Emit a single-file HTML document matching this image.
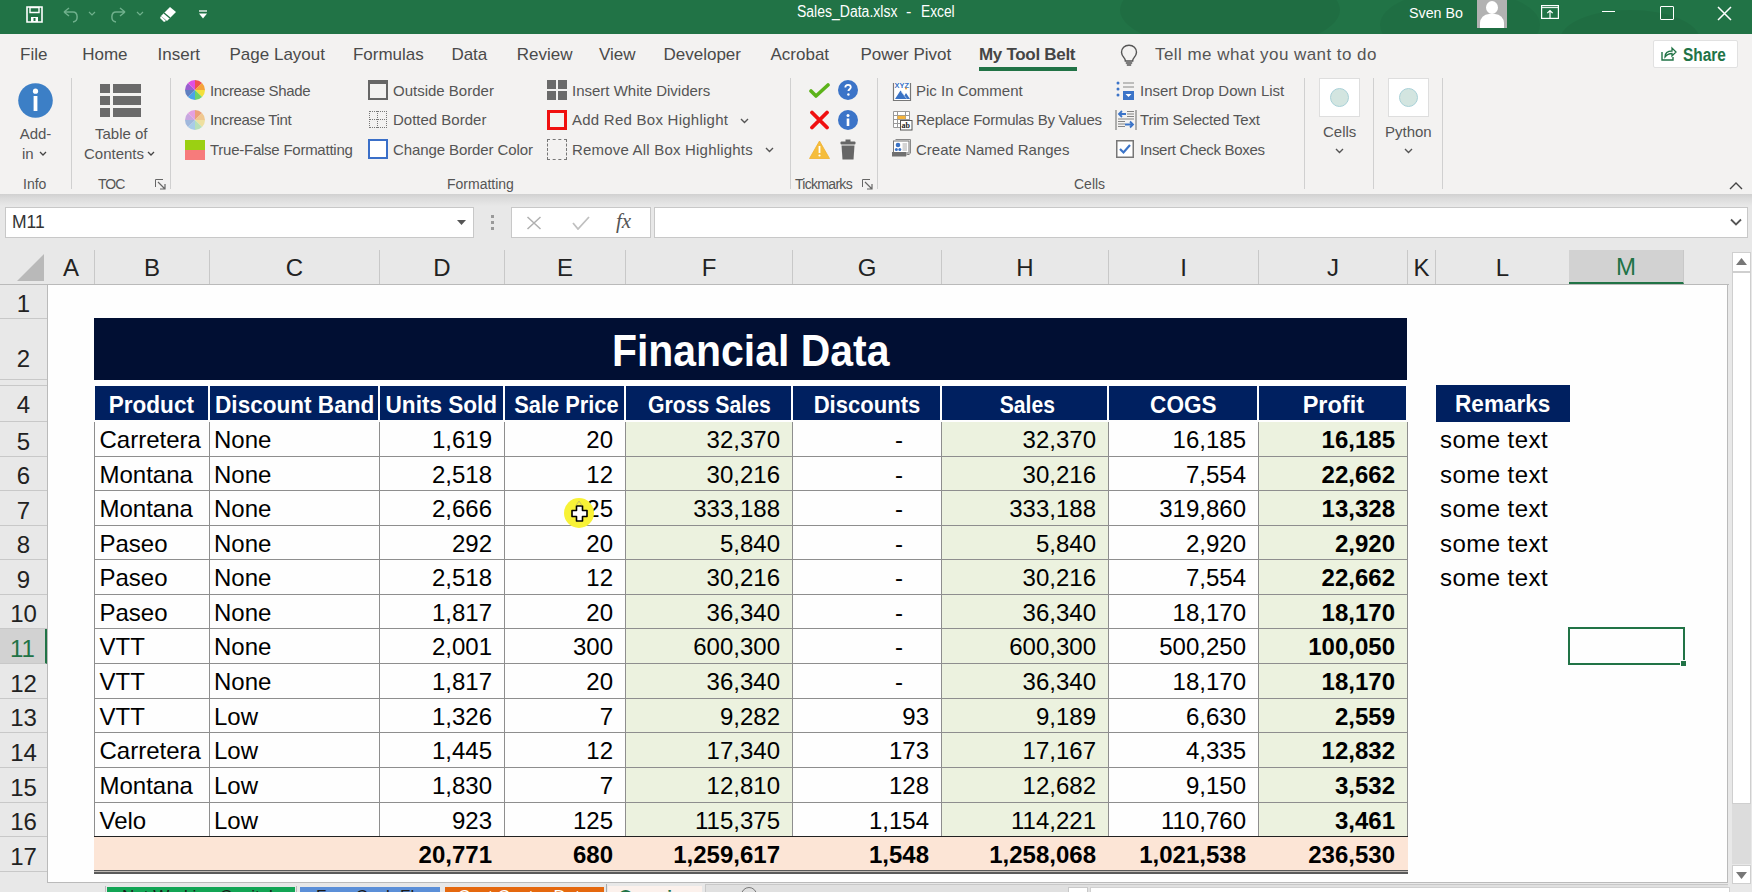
<!DOCTYPE html><html><head><meta charset="utf-8"><style>
*{margin:0;padding:0;box-sizing:border-box}
html,body{width:1752px;height:892px;overflow:hidden;background:#fff;font-family:"Liberation Sans", sans-serif}
.a{position:absolute}
.t{position:absolute;white-space:pre;line-height:1}
.tab{position:absolute;top:45px;font-size:17px;color:#4a4a4a;white-space:pre;line-height:20px}
.rl{position:absolute;font-size:15px;color:#555;white-space:pre;line-height:18px}
.gl{position:absolute;top:176px;font-size:14px;color:#555;white-space:pre;line-height:16px}
.sep{position:absolute;top:78px;width:1px;height:111px;background:#d0d0d0}
.ch{position:absolute;top:250px;height:34px;font-size:24px;line-height:36px;text-align:center;color:#222;border-right:1px solid #c8c8c8}
.rh{position:absolute;left:0;width:47px;font-size:24px;padding-top:2px;text-align:center;color:#222;border-bottom:1px solid #c8c8c8}
.c{position:absolute;font-size:24px;white-space:pre;color:#000;line-height:1}
.hd{position:absolute;background:#002060;color:#fff;font-weight:bold;font-size:24px;text-align:center;line-height:37px;white-space:pre} .hd span{display:inline-block;transform:scaleX(0.94)}
</style></head><body><div class="a" style="left:0;top:0;width:1752px;height:34px;background:#217346"></div><div class="a" style="left:1000px;top:0;width:752px;height:34px;overflow:hidden"><div class="a" style="left:120px;top:-30px;width:220px;height:80px;border-radius:50%;background:rgba(0,0,0,0.05)"></div><div class="a" style="left:380px;top:-10px;width:160px;height:70px;border-radius:50%;background:rgba(0,0,0,0.04)"></div><div class="a" style="left:560px;top:10px;width:140px;height:60px;border-radius:50%;background:rgba(0,0,0,0.05)"></div></div><svg class="a" style="left:26px;top:6px" width="17" height="17" viewBox="0 0 17 17"><path d="M1 1h15v15H1z" fill="none" stroke="#fff" stroke-width="1.6"/><path d="M4 1.5h9v5H4z" fill="none" stroke="#fff" stroke-width="1.4"/><rect x="5" y="11" width="7" height="5" fill="#fff"/><rect x="7.5" y="12" width="2" height="3" fill="#217346"/></svg><svg class="a" style="left:61px;top:7px" width="36" height="16" viewBox="0 0 36 16"><path d="M3 5 L8 1 M3 5 L8 9 M3 5 H12 C17 5 18 14 12 15" fill="none" stroke="#6fb08c" stroke-width="1.5"/><path d="M28 5 L31 8 L34 5" fill="none" stroke="#6fb08c" stroke-width="1.2"/></svg><svg class="a" style="left:110px;top:7px" width="36" height="16" viewBox="0 0 36 16"><path d="M15 5 L10 1 M15 5 L10 9 M15 5 H6 C1 5 0 14 6 15" fill="none" stroke="#6fb08c" stroke-width="1.5"/><path d="M27 5 L30 8 L33 5" fill="none" stroke="#6fb08c" stroke-width="1.2"/></svg><svg class="a" style="left:159px;top:6px" width="18" height="17" viewBox="0 0 18 17"><path d="M11 1 L17 6 L8 15 L2 10 Z" fill="#fff"/><path d="M5 7 L11 12" stroke="#217346" stroke-width="1.3"/><path d="M2 10 L1 12 L5 16 L7 15" fill="#fff"/></svg><svg class="a" style="left:199px;top:10px" width="8" height="9" viewBox="0 0 8 9"><path d="M0 1h8" stroke="#fff" stroke-width="1.3"/><path d="M0 3.5h8l-4 5z" fill="#fff"/></svg><div class="t" style="left:797px;top:4px;font-size:16px;color:#fff;transform:scaleX(0.875);transform-origin:0 0">Sales_Data.xlsx</div><div class="t" style="left:906px;top:4px;font-size:16px;color:#fff">-</div><div class="t" style="left:921px;top:4px;font-size:16px;color:#fff;transform:scaleX(0.86);transform-origin:0 0">Excel</div><div class="t" style="left:1409px;top:5px;font-size:15.5px;color:#fff;transform:scaleX(0.92);transform-origin:0 0">Sven Bo</div><div class="a" style="left:1477px;top:0;width:30px;height:28px;background:#b2b2b2;overflow:hidden"><div class="a" style="left:9px;top:1px;width:12px;height:13px;border-radius:50%;background:#fff"></div><div class="a" style="left:3px;top:14px;width:24px;height:22px;border-radius:9px 9px 0 0;background:#fff"></div></div><svg class="a" style="left:1541px;top:5px" width="18" height="14" viewBox="0 0 18 14"><rect x="0.6" y="0.6" width="16.8" height="12.8" fill="none" stroke="#fff" stroke-width="1.2"/><path d="M1 2.6h16" stroke="#fff" stroke-width="1"/><path d="M9 13V5.5M6.3 8.2L9 5.5l2.7 2.7" fill="none" stroke="#fff" stroke-width="1.2"/></svg><div class="a" style="left:1602px;top:11px;width:13px;height:1px;background:#fff"></div><div class="a" style="left:1660px;top:6px;width:14px;height:14px;border:1.5px solid #fff;border-radius:1px"></div><svg class="a" style="left:1717px;top:6px" width="15" height="15" viewBox="0 0 15 15"><path d="M1 1L14 14M14 1L1 14" stroke="#fff" stroke-width="1.5"/></svg><div class="a" style="left:0;top:34px;width:1752px;height:160px;background:#f3f2f1"></div><div class="tab" style="left:20.0px">File</div><div class="tab" style="left:82.2px">Home</div><div class="tab" style="left:157.5px">Insert</div><div class="tab" style="left:229.5px">Page Layout</div><div class="tab" style="left:352.9px">Formulas</div><div class="tab" style="left:451.4px">Data</div><div class="tab" style="left:516.7px">Review</div><div class="tab" style="left:598.9px">View</div><div class="tab" style="left:663.5px">Developer</div><div class="tab" style="left:770.5px">Acrobat</div><div class="tab" style="left:860.5px">Power Pivot</div><div class="tab" style="left:979px;font-weight:bold;color:#454545;letter-spacing:-0.3px">My Tool Belt</div><div class="a" style="left:979px;top:67px;width:98px;height:4px;background:#217346"></div><svg class="a" style="left:1120px;top:44px" width="18" height="22" viewBox="0 0 18 22"><path d="M9 1.2C4.6 1.2 1.5 4.3 1.5 8.3c0 2.6 1.5 4.3 2.6 5.6.8.9 1.2 1.8 1.2 2.8V17h7.4v-.3c0-1 .4-1.9 1.2-2.8 1.1-1.3 2.6-3 2.6-5.6 0-4-3.1-7.1-7.5-7.1z" fill="none" stroke="#555" stroke-width="1.4"/><path d="M5.8 19h6.4M6.8 21h4.4" stroke="#555" stroke-width="1.4"/></svg><div class="tab" style="left:1155px;color:#555;letter-spacing:0.45px">Tell me what you want to do</div><div class="a" style="left:1653px;top:40px;width:85px;height:28px;background:#fff;border:1px solid #e1e1e1;border-radius:2px"></div><svg class="a" style="left:1661px;top:46px" width="16" height="15" viewBox="0 0 16 15"><path d="M1 6v8h11v-3" fill="none" stroke="#217346" stroke-width="1.4"/><path d="M4 11c0-4 3-6 7-6V2l4 4-4 4V7.5c-3 0-5 1-7 3.5z" fill="none" stroke="#217346" stroke-width="1.3"/></svg><div class="tab" style="left:1683px;top:45px;font-weight:bold;color:#217346;font-size:17.5px;transform:scaleX(0.88);transform-origin:0 0">Share</div><div class="a" style="left:0;top:194px;width:1752px;height:56px;background:#e8e8e8"></div><div class="a" style="left:0;top:194px;width:1752px;height:12px;background:linear-gradient(#d0d0d0,#dcdcdc 40%,#e8e8e8)"></div><div class="sep" style="left:71px"></div><div class="sep" style="left:170px"></div><div class="sep" style="left:790px"></div><div class="sep" style="left:877px"></div><div class="sep" style="left:1304px"></div><div class="sep" style="left:1373px"></div><div class="sep" style="left:1442px"></div><svg class="a" style="left:18px;top:83px" width="35" height="35" viewBox="0 0 35 35"><circle cx="17.5" cy="17.5" r="17.3" fill="#3c7fc6"/><circle cx="17.5" cy="8.2" r="2.6" fill="#fff"/><rect x="15.6" y="13" width="3.8" height="15" fill="#fff"/></svg><div class="rl" style="left:18px;top:125px;width:35px;text-align:center">Add-</div><div class="rl" style="left:22px;top:145px">in</div><svg class="a" style="left:39px;top:151px" width="8" height="5" viewBox="0 0 8 5"><path d="M1 1l3 3 3-3" fill="none" stroke="#444" stroke-width="1.3"/></svg><div class="gl" style="left:23px">Info</div><div class="a" style="left:100px;top:84px;width:10px;height:9px;background:#6a6a6a"></div><div class="a" style="left:113px;top:84px;width:28px;height:9px;background:#6a6a6a"></div><div class="a" style="left:100px;top:96px;width:10px;height:9px;background:#6a6a6a"></div><div class="a" style="left:113px;top:96px;width:28px;height:9px;background:#6a6a6a"></div><div class="a" style="left:100px;top:108px;width:10px;height:9px;background:#6a6a6a"></div><div class="a" style="left:113px;top:108px;width:28px;height:9px;background:#6a6a6a"></div><div class="rl" style="left:95px;top:125px">Table of</div><div class="rl" style="left:84px;top:145px">Contents</div><svg class="a" style="left:147px;top:151px" width="8" height="5" viewBox="0 0 8 5"><path d="M1 1l3 3 3-3" fill="none" stroke="#444" stroke-width="1.3"/></svg><div class="gl" style="left:98px;letter-spacing:-1px">TOC</div><svg class="a" style="left:155px;top:179px" width="11" height="11" viewBox="0 0 11 11"><path d="M0.5 8V0.5H8" fill="none" stroke="#666" stroke-width="1"/><path d="M3 3l6.5 6.5M10 5v5H5" fill="none" stroke="#666" stroke-width="1.2"/></svg><svg class="a" style="left:185px;top:80px" width="20" height="20" viewBox="0 0 20 20"><path d="M10 10L10.00 0.00A10 10 0 0 1 17.07 2.93Z" fill="#f0504f"/><path d="M10 10L17.07 2.93A10 10 0 0 1 20.00 10.00Z" fill="#f5a33a"/><path d="M10 10L20.00 10.00A10 10 0 0 1 17.07 17.07Z" fill="#f3e03b"/><path d="M10 10L17.07 17.07A10 10 0 0 1 10.00 20.00Z" fill="#6cd36c"/><path d="M10 10L10.00 20.00A10 10 0 0 1 2.93 17.07Z" fill="#4aa3ea"/><path d="M10 10L2.93 17.07A10 10 0 0 1 0.00 10.00Z" fill="#5f7fc0"/><path d="M10 10L0.00 10.00A10 10 0 0 1 2.93 2.93Z" fill="#9a5fd0"/><path d="M10 10L2.93 2.93A10 10 0 0 1 10.00 0.00Z" fill="#e04fe0"/></svg><svg class="a" style="left:185px;top:110px" width="20" height="20" viewBox="0 0 20 20"><path d="M10 10L10.00 0.00A10 10 0 0 1 17.07 2.93Z" fill="#eca07a"/><path d="M10 10L17.07 2.93A10 10 0 0 1 20.00 10.00Z" fill="#f0c890"/><path d="M10 10L20.00 10.00A10 10 0 0 1 17.07 17.07Z" fill="#eee0a0"/><path d="M10 10L17.07 17.07A10 10 0 0 1 10.00 20.00Z" fill="#b8e0b8"/><path d="M10 10L10.00 20.00A10 10 0 0 1 2.93 17.07Z" fill="#a8cce8"/><path d="M10 10L2.93 17.07A10 10 0 0 1 0.00 10.00Z" fill="#a0b8dc"/><path d="M10 10L0.00 10.00A10 10 0 0 1 2.93 2.93Z" fill="#c8a8e0"/><path d="M10 10L2.93 2.93A10 10 0 0 1 10.00 0.00Z" fill="#e4a0e0"/></svg><div class="a" style="left:185px;top:140px;width:20px;height:10px;background:#9bd012"></div><div class="a" style="left:185px;top:150px;width:20px;height:10px;background:#f77b7b"></div><div class="rl" style="left:210px;top:82px;letter-spacing:-0.35px">Increase Shade</div><div class="rl" style="left:210px;top:111px;letter-spacing:-0.35px">Increase Tint</div><div class="rl" style="left:210px;top:141px;letter-spacing:-0.25px">True-False Formatting</div><div class="a" style="left:368px;top:80px;width:20px;height:20px;border:2px solid #666;border-top-width:4px"></div><div class="a" style="left:369px;top:111px;width:18px;height:17px;border:1px dotted #777"></div><div class="a" style="left:377px;top:111px;width:1px;height:17px;border-left:1px dotted #777"></div><div class="a" style="left:369px;top:119px;width:18px;height:1px;border-top:1px dotted #777"></div><div class="a" style="left:368px;top:139px;width:20px;height:20px;border:2.5px solid #3a6fc8;background:#fff"></div><div class="rl" style="left:393px;top:82px">Outside Border</div><div class="rl" style="left:393px;top:111px">Dotted Border</div><div class="rl" style="left:393px;top:141px;letter-spacing:-0.1px">Change Border Color</div><div class="a" style="left:547px;top:80px;width:9px;height:9px;background:#6a6a6a"></div><div class="a" style="left:558px;top:80px;width:9px;height:9px;background:#6a6a6a"></div><div class="a" style="left:547px;top:91px;width:9px;height:9px;background:#6a6a6a"></div><div class="a" style="left:558px;top:91px;width:9px;height:9px;background:#6a6a6a"></div><div class="a" style="left:547px;top:110px;width:20px;height:20px;border:3px solid #f01010"></div><div class="a" style="left:547px;top:139px;width:20px;height:21px;border:1.5px dashed #777"></div><div class="rl" style="left:572px;top:82px">Insert White Dividers</div><div class="rl" style="left:572px;top:111px;letter-spacing:0.25px">Add Red Box Highlight</div><div class="rl" style="left:572px;top:141px;letter-spacing:0.2px">Remove All Box Highlights</div><svg class="a" style="left:740px;top:118px" width="9" height="6" viewBox="0 0 9 6"><path d="M1 1l3.5 3.5L8 1" fill="none" stroke="#555" stroke-width="1.4"/></svg><svg class="a" style="left:765px;top:147px" width="9" height="6" viewBox="0 0 9 6"><path d="M1 1l3.5 3.5L8 1" fill="none" stroke="#555" stroke-width="1.4"/></svg><div class="gl" style="left:447px">Formatting</div><svg class="a" style="left:809px;top:83px" width="21" height="15" viewBox="0 0 21 15"><path d="M2 8l5 5L19 2" fill="none" stroke="#5cb31a" stroke-width="3.6" stroke-linecap="round" stroke-linejoin="round"/></svg><svg class="a" style="left:838px;top:80px" width="20" height="20" viewBox="0 0 20 20"><circle cx="10" cy="10" r="10" fill="#3b74c8"/><path d="M7.3 7.5c0-1.7 1.2-2.7 2.8-2.7s2.7 1 2.7 2.5c0 1.8-2.4 2-2.4 3.8" fill="none" stroke="#fff" stroke-width="1.8"/><circle cx="10.4" cy="14.5" r="1.2" fill="#fff"/></svg><svg class="a" style="left:809px;top:110px" width="21" height="20" viewBox="0 0 21 20"><path d="M3 2.5l15 15M18 2.5l-15 15" stroke="#f01010" stroke-width="3.8" stroke-linecap="round"/></svg><svg class="a" style="left:838px;top:110px" width="20" height="20" viewBox="0 0 20 20"><circle cx="10" cy="10" r="10" fill="#3b74c8"/><circle cx="10" cy="5.5" r="1.5" fill="#fff"/><rect x="8.7" y="8.5" width="2.6" height="7.5" fill="#fff"/></svg><svg class="a" style="left:809px;top:140px" width="21" height="19" viewBox="0 0 21 19"><path d="M10.5 1L20.5 18.5H0.5Z" fill="#f5bd3c" stroke="#f0b030" stroke-width="0.8" stroke-linejoin="round"/><rect x="9.6" y="6" width="1.8" height="7" fill="#fff"/><circle cx="10.5" cy="15.5" r="1.1" fill="#fff"/></svg><svg class="a" style="left:840px;top:139px" width="16" height="21" viewBox="0 0 16 21"><rect x="0.5" y="2.5" width="15" height="3" rx="1" fill="#666"/><rect x="5.5" y="0.5" width="5" height="2.5" fill="#666"/><path d="M1.5 6.5h13l-1 14h-11z" fill="#666"/></svg><div class="gl" style="left:795px;letter-spacing:-0.7px">Tickmarks</div><svg class="a" style="left:862px;top:179px" width="11" height="11" viewBox="0 0 11 11"><path d="M0.5 8V0.5H8" fill="none" stroke="#666" stroke-width="1"/><path d="M3 3l6.5 6.5M10 5v5H5" fill="none" stroke="#666" stroke-width="1.2"/></svg><svg class="a" style="left:892px;top:78px" width="21" height="24" viewBox="0 0 21 24"><path d="M1.5 5v17.5h17V5" fill="#fff" stroke="#777" stroke-width="1.2"/><text x="2.6" y="9.6" font-size="8" font-weight="bold" fill="#3a72c4" font-family="Liberation Sans" textLength="14.5" lengthAdjust="spacingAndGlyphs">XYZ</text><circle cx="14" cy="10.5" r="1" fill="#f0a030"/><path d="M3 21l5.5-8.5 4 5 1.5-2.5 4 6z" fill="#3a72c4"/><path d="M9.5 14l5 6.5" stroke="#fff" stroke-width="0.8" opacity="0.7"/></svg><svg class="a" style="left:892px;top:110px" width="21" height="21" viewBox="0 0 21 21"><path d="M1.5 1.5h16v16h-16zM1.5 5.5h16M1.5 9.5h16M1.5 13.5h16M5.5 1.5v16M13.5 1.5v16" fill="#fff" stroke="#999" stroke-width="1"/><rect x="5.5" y="5.8" width="8" height="3.2" fill="#f5b43c"/><rect x="8.5" y="10.5" width="11.5" height="9.5" fill="#fff" stroke="#555" stroke-width="1"/><text x="9.6" y="18.2" font-size="8" font-weight="bold" fill="#222" font-family="Liberation Serif">ab</text></svg><svg class="a" style="left:892px;top:138px" width="20" height="20" viewBox="0 0 20 20"><path d="M3.5 1.5h15v14" fill="none" stroke="#888" stroke-width="1"/><rect x="1.5" y="3" width="15.5" height="13.5" fill="#fff" stroke="#777" stroke-width="1"/><circle cx="6" cy="7" r="2.3" fill="#3a72c4"/><circle cx="4.4" cy="11.6" r="1.5" fill="#3a72c4"/><circle cx="7.8" cy="11.6" r="1.5" fill="#3a72c4"/><path d="M10.5 6h4.5M10.5 8h4.5M10.5 10h4.5M10.5 12h4.5" stroke="#aaa" stroke-width="1"/><rect x="0" y="14" width="14" height="4.5" fill="#707070"/><path d="M14 14h3l-3 4.5z" fill="#aaa"/></svg><div class="rl" style="left:916px;top:82px">Pic In Comment</div><div class="rl" style="left:916px;top:111px;letter-spacing:-0.25px">Replace Formulas By Values</div><div class="rl" style="left:916px;top:141px">Create Named Ranges</div><svg class="a" style="left:1116px;top:81px" width="19" height="20" viewBox="0 0 19 20"><circle cx="2" cy="2" r="1.5" fill="#3b74c8"/><circle cx="2" cy="8" r="1.5" fill="#3b74c8"/><circle cx="2" cy="14" r="1.5" fill="#3b74c8"/><path d="M7 2h11M7 6h11" stroke="#888" stroke-width="1.2"/><rect x="7" y="10" width="11" height="9" fill="#3b74c8"/><path d="M9.5 13l3 3 3-3z" fill="#fff"/></svg><svg class="a" style="left:1115px;top:109px" width="22" height="21" viewBox="0 0 22 21"><path d="M1 1v20M21 1v20" stroke="#888" stroke-width="1.3"/><path d="M12 2.5h7M12 5h7M12 7.5h7M3 10h16M3 12.5h7M3 15h7M3 17.5h7" stroke="#777" stroke-width="0.9"/><path d="M11 5H4M7 2L4 5 7 8M10 15.5h8M15 12.5l3 3-3 3" fill="none" stroke="#3b74c8" stroke-width="1.8"/></svg><svg class="a" style="left:1116px;top:140px" width="18" height="18" viewBox="0 0 18 18"><rect x="0.75" y="0.75" width="16.5" height="16.5" fill="#fff" stroke="#777" stroke-width="1.5"/><path d="M4 9l3.5 3.5L14 5" fill="none" stroke="#3b74c8" stroke-width="2.2"/></svg><div class="rl" style="left:1140px;top:82px">Insert Drop Down List</div><div class="rl" style="left:1140px;top:111px;letter-spacing:-0.2px">Trim Selected Text</div><div class="rl" style="left:1140px;top:141px;letter-spacing:-0.3px">Insert Check Boxes</div><div class="gl" style="left:1074px">Cells</div><div class="a" style="left:1319px;top:78px;width:41px;height:39px;background:#fff;border:1px solid #dedede"></div><div class="a" style="left:1330px;top:88px;width:19px;height:19px;border-radius:50%;background:#d3e5e0;border:1px solid #a9d1d8"></div><div class="rl" style="left:1323px;top:123px">Cells</div><svg class="a" style="left:1335px;top:148px" width="9" height="6" viewBox="0 0 9 6"><path d="M1 1l3.5 3.5L8 1" fill="none" stroke="#555" stroke-width="1.4"/></svg><div class="a" style="left:1388px;top:78px;width:41px;height:39px;background:#fff;border:1px solid #dedede"></div><div class="a" style="left:1399px;top:88px;width:19px;height:19px;border-radius:50%;background:#d3e5e0;border:1px solid #a9d1d8"></div><div class="rl" style="left:1385px;top:123px">Python</div><svg class="a" style="left:1404px;top:148px" width="9" height="6" viewBox="0 0 9 6"><path d="M1 1l3.5 3.5L8 1" fill="none" stroke="#555" stroke-width="1.4"/></svg><svg class="a" style="left:1729px;top:181px" width="14" height="9" viewBox="0 0 14 9"><path d="M1 8l6-6 6 6" fill="none" stroke="#444" stroke-width="1.4"/></svg><div class="a" style="left:5px;top:207px;width:469px;height:31px;background:#fff;border:1px solid #c8c8c8"></div><div class="t" style="left:12px;top:214px;font-size:17.5px;color:#333">M11</div><svg class="a" style="left:457px;top:220px" width="9" height="5" viewBox="0 0 9 5"><path d="M0 0h9L4.5 5z" fill="#555"/></svg><div class="a" style="left:491px;top:215px;width:3px;height:3px;background:#999"></div><div class="a" style="left:491px;top:221px;width:3px;height:3px;background:#999"></div><div class="a" style="left:491px;top:227px;width:3px;height:3px;background:#999"></div><div class="a" style="left:511px;top:207px;width:140px;height:31px;background:#fff;border:1px solid #c8c8c8"></div><svg class="a" style="left:526px;top:216px" width="16" height="14" viewBox="0 0 16 14"><path d="M1.5 1l13 12M14.5 1l-13 12" stroke="#b0b0b0" stroke-width="1.5"/></svg><svg class="a" style="left:572px;top:216px" width="18" height="14" viewBox="0 0 18 14"><path d="M1 7l5 6L17 1" fill="none" stroke="#c0c0c0" stroke-width="1.8"/></svg><div class="t" style="left:616px;top:211px;font-family:'Liberation Serif',serif;font-style:italic;font-size:21px;color:#555">fx</div><div class="a" style="left:654px;top:207px;width:1094px;height:31px;background:#fff;border:1px solid #c8c8c8"></div><svg class="a" style="left:1730px;top:218px" width="12" height="8" viewBox="0 0 12 8"><path d="M1 1.5l5 5 5-5" fill="none" stroke="#555" stroke-width="1.8"/></svg><div class="a" style="left:0;top:250px;width:1752px;height:642px;background:#e8e8e8"></div><div class="a" style="left:48px;top:284px;width:1680px;height:599px;background:#fefefe;border-right:1px solid #bababa;border-bottom:1px solid #bababa"></div><svg class="a" style="left:17px;top:254px" width="27" height="27" viewBox="0 0 27 27"><path d="M27 0V27H0Z" fill="#b9b9b9"/></svg><div class="ch" style="left:48px;width:47px">A</div><div class="ch" style="left:95px;width:115px">B</div><div class="ch" style="left:210px;width:170px">C</div><div class="ch" style="left:380px;width:125px">D</div><div class="ch" style="left:505px;width:121px">E</div><div class="ch" style="left:626px;width:167px">F</div><div class="ch" style="left:793px;width:149px">G</div><div class="ch" style="left:942px;width:167px">H</div><div class="ch" style="left:1109px;width:150px">I</div><div class="ch" style="left:1259px;width:149px">J</div><div class="ch" style="left:1408px;width:28px">K</div><div class="ch" style="left:1436px;width:134px">L</div><div class="ch" style="left:1569px;width:115px;background:#d2d2d2;color:#217346;border-bottom:2px solid #217346;line-height:33px">M</div><div class="a" style="left:0;top:284px;width:1729px;height:1px;background:#bababa"></div><div class="a" style="left:47px;top:284px;width:1px;height:599px;background:#bababa"></div><div class="rh" style="top:285px;height:34px;line-height:34px">1</div><div class="rh" style="top:319px;height:61px;line-height:76px">2</div><div class="rh" style="top:386px;height:36px;line-height:33px">4</div><div class="rh" style="top:422px;height:35px;line-height:35px">5</div><div class="rh" style="top:457px;height:34px;line-height:34px">6</div><div class="rh" style="top:491px;height:35px;line-height:35px">7</div><div class="rh" style="top:526px;height:34px;line-height:34px">8</div><div class="rh" style="top:560px;height:35px;line-height:35px">9</div><div class="rh" style="top:595px;height:34px;line-height:34px">10</div><div class="rh" style="top:629px;height:35px;line-height:35px;background:#d2d2d2;color:#217346;border-right:2px solid #217346">11</div><div class="rh" style="top:664px;height:35px;line-height:35px">12</div><div class="rh" style="top:699px;height:34px;line-height:34px">13</div><div class="rh" style="top:733px;height:35px;line-height:35px">14</div><div class="rh" style="top:768px;height:35px;line-height:35px">15</div><div class="rh" style="top:803px;height:34px;line-height:34px">16</div><div class="rh" style="top:837px;height:35px;line-height:35px">17</div><div class="rh" style="top:872px;height:13px;line-height:13px"></div><div class="a" style="left:0;top:379px;width:47px;height:7px;border-top:1px solid #c8c8c8;border-bottom:1px solid #c8c8c8;background:#e8e8e8"></div><div class="a" style="left:94px;top:318px;width:1313px;height:62px;background:#010f33"></div><div class="t" style="left:612px;top:329px;font-size:44px;font-weight:bold;color:#fff;transform:scaleX(0.93);transform-origin:0 0">Financial Data</div><div class="hd" style="left:95px;top:386px;width:113px;height:34px"><span style="position:relative;left:0px;transform:scaleX(0.94)">Product</span></div><div class="hd" style="left:210px;top:386px;width:168px;height:34px"><span style="position:relative;left:0px;transform:scaleX(0.94)">Discount Band</span></div><div class="hd" style="left:380px;top:386px;width:123px;height:34px"><span style="position:relative;left:0px;transform:scaleX(0.94)">Units Sold</span></div><div class="hd" style="left:505px;top:386px;width:119px;height:34px"><span style="position:relative;left:2px;transform:scaleX(0.91)">Sale Price</span></div><div class="hd" style="left:626px;top:386px;width:165px;height:34px"><span style="position:relative;left:1px;transform:scaleX(0.885)">Gross Sales</span></div><div class="hd" style="left:793px;top:386px;width:147px;height:34px"><span style="position:relative;left:1px;transform:scaleX(0.92)">Discounts</span></div><div class="hd" style="left:942px;top:386px;width:165px;height:34px"><span style="position:relative;left:3px;transform:scaleX(0.88)">Sales</span></div><div class="hd" style="left:1109px;top:386px;width:148px;height:34px"><span style="position:relative;left:0px;transform:scaleX(0.94)">COGS</span></div><div class="hd" style="left:1259px;top:386px;width:147px;height:34px"><span style="position:relative;left:1px;transform:scaleX(0.98)">Profit</span></div><div class="hd" style="left:1436px;top:385px;width:134px;height:37px;line-height:38px"><span>Remarks</span></div><div class="a" style="left:625px;top:422px;width:167px;height:414px;background:#ecf2df"></div><div class="a" style="left:941px;top:422px;width:167px;height:414px;background:#ecf2df"></div><div class="a" style="left:1258px;top:422px;width:149px;height:414px;background:#ecf2df"></div><div class="a" style="left:94px;top:456px;width:1314px;height:1px;background:#8e8e8e"></div><div class="a" style="left:94px;top:490px;width:1314px;height:1px;background:#8e8e8e"></div><div class="a" style="left:94px;top:525px;width:1314px;height:1px;background:#8e8e8e"></div><div class="a" style="left:94px;top:559px;width:1314px;height:1px;background:#8e8e8e"></div><div class="a" style="left:94px;top:594px;width:1314px;height:1px;background:#8e8e8e"></div><div class="a" style="left:94px;top:628px;width:1314px;height:1px;background:#8e8e8e"></div><div class="a" style="left:94px;top:663px;width:1314px;height:1px;background:#8e8e8e"></div><div class="a" style="left:94px;top:698px;width:1314px;height:1px;background:#8e8e8e"></div><div class="a" style="left:94px;top:732px;width:1314px;height:1px;background:#8e8e8e"></div><div class="a" style="left:94px;top:767px;width:1314px;height:1px;background:#8e8e8e"></div><div class="a" style="left:94px;top:802px;width:1314px;height:1px;background:#8e8e8e"></div><div class="a" style="left:94px;top:422px;width:1px;height:414px;background:#8e8e8e"></div><div class="a" style="left:209px;top:422px;width:1px;height:414px;background:#8e8e8e"></div><div class="a" style="left:379px;top:422px;width:1px;height:414px;background:#8e8e8e"></div><div class="a" style="left:504px;top:422px;width:1px;height:414px;background:#8e8e8e"></div><div class="a" style="left:625px;top:422px;width:1px;height:414px;background:#8e8e8e"></div><div class="a" style="left:792px;top:422px;width:1px;height:414px;background:#8e8e8e"></div><div class="a" style="left:941px;top:422px;width:1px;height:414px;background:#8e8e8e"></div><div class="a" style="left:1108px;top:422px;width:1px;height:414px;background:#8e8e8e"></div><div class="a" style="left:1258px;top:422px;width:1px;height:414px;background:#8e8e8e"></div><div class="a" style="left:1407px;top:422px;width:1px;height:414px;background:#8e8e8e"></div><div class="a" style="left:94px;top:836px;width:1314px;height:35px;background:#fce5d6"></div><div class="a" style="left:94px;top:836px;width:1314px;height:1px;background:#222"></div><div class="a" style="left:94px;top:870px;width:1314px;height:4px;border-top:1px solid #5a5a5a;border-bottom:2px solid #5a5a5a;background:#bdb8b3"></div><div class="c" style="left:99.5px;top:428px">Carretera</div><div class="c" style="left:214px;top:428px">None</div><div class="c" style="right:1260px;top:428px;">1,619</div><div class="c" style="right:1139px;top:428px;">20</div><div class="c" style="right:972px;top:428px;">32,370</div><div class="c" style="left:895px;top:428px">-</div><div class="c" style="right:656px;top:428px;">32,370</div><div class="c" style="right:506px;top:428px;">16,185</div><div class="c" style="right:357px;top:428px;font-weight:bold;">16,185</div><div class="c" style="left:1440px;top:428px;letter-spacing:0.45px">some text</div><div class="c" style="left:99.5px;top:463px">Montana</div><div class="c" style="left:214px;top:463px">None</div><div class="c" style="right:1260px;top:463px;">2,518</div><div class="c" style="right:1139px;top:463px;">12</div><div class="c" style="right:972px;top:463px;">30,216</div><div class="c" style="left:895px;top:463px">-</div><div class="c" style="right:656px;top:463px;">30,216</div><div class="c" style="right:506px;top:463px;">7,554</div><div class="c" style="right:357px;top:463px;font-weight:bold;">22,662</div><div class="c" style="left:1440px;top:463px;letter-spacing:0.45px">some text</div><div class="c" style="left:99.5px;top:497px">Montana</div><div class="c" style="left:214px;top:497px">None</div><div class="c" style="right:1260px;top:497px;">2,666</div><div class="c" style="right:1139px;top:497px;">125</div><div class="c" style="right:972px;top:497px;">333,188</div><div class="c" style="left:895px;top:497px">-</div><div class="c" style="right:656px;top:497px;">333,188</div><div class="c" style="right:506px;top:497px;">319,860</div><div class="c" style="right:357px;top:497px;font-weight:bold;">13,328</div><div class="c" style="left:1440px;top:497px;letter-spacing:0.45px">some text</div><div class="c" style="left:99.5px;top:532px">Paseo</div><div class="c" style="left:214px;top:532px">None</div><div class="c" style="right:1260px;top:532px;">292</div><div class="c" style="right:1139px;top:532px;">20</div><div class="c" style="right:972px;top:532px;">5,840</div><div class="c" style="left:895px;top:532px">-</div><div class="c" style="right:656px;top:532px;">5,840</div><div class="c" style="right:506px;top:532px;">2,920</div><div class="c" style="right:357px;top:532px;font-weight:bold;">2,920</div><div class="c" style="left:1440px;top:532px;letter-spacing:0.45px">some text</div><div class="c" style="left:99.5px;top:566px">Paseo</div><div class="c" style="left:214px;top:566px">None</div><div class="c" style="right:1260px;top:566px;">2,518</div><div class="c" style="right:1139px;top:566px;">12</div><div class="c" style="right:972px;top:566px;">30,216</div><div class="c" style="left:895px;top:566px">-</div><div class="c" style="right:656px;top:566px;">30,216</div><div class="c" style="right:506px;top:566px;">7,554</div><div class="c" style="right:357px;top:566px;font-weight:bold;">22,662</div><div class="c" style="left:1440px;top:566px;letter-spacing:0.45px">some text</div><div class="c" style="left:99.5px;top:601px">Paseo</div><div class="c" style="left:214px;top:601px">None</div><div class="c" style="right:1260px;top:601px;">1,817</div><div class="c" style="right:1139px;top:601px;">20</div><div class="c" style="right:972px;top:601px;">36,340</div><div class="c" style="left:895px;top:601px">-</div><div class="c" style="right:656px;top:601px;">36,340</div><div class="c" style="right:506px;top:601px;">18,170</div><div class="c" style="right:357px;top:601px;font-weight:bold;">18,170</div><div class="c" style="left:99.5px;top:635px">VTT</div><div class="c" style="left:214px;top:635px">None</div><div class="c" style="right:1260px;top:635px;">2,001</div><div class="c" style="right:1139px;top:635px;">300</div><div class="c" style="right:972px;top:635px;">600,300</div><div class="c" style="left:895px;top:635px">-</div><div class="c" style="right:656px;top:635px;">600,300</div><div class="c" style="right:506px;top:635px;">500,250</div><div class="c" style="right:357px;top:635px;font-weight:bold;">100,050</div><div class="c" style="left:99.5px;top:670px">VTT</div><div class="c" style="left:214px;top:670px">None</div><div class="c" style="right:1260px;top:670px;">1,817</div><div class="c" style="right:1139px;top:670px;">20</div><div class="c" style="right:972px;top:670px;">36,340</div><div class="c" style="left:895px;top:670px">-</div><div class="c" style="right:656px;top:670px;">36,340</div><div class="c" style="right:506px;top:670px;">18,170</div><div class="c" style="right:357px;top:670px;font-weight:bold;">18,170</div><div class="c" style="left:99.5px;top:705px">VTT</div><div class="c" style="left:214px;top:705px">Low</div><div class="c" style="right:1260px;top:705px;">1,326</div><div class="c" style="right:1139px;top:705px;">7</div><div class="c" style="right:972px;top:705px;">9,282</div><div class="c" style="right:823px;top:705px;">93</div><div class="c" style="right:656px;top:705px;">9,189</div><div class="c" style="right:506px;top:705px;">6,630</div><div class="c" style="right:357px;top:705px;font-weight:bold;">2,559</div><div class="c" style="left:99.5px;top:739px">Carretera</div><div class="c" style="left:214px;top:739px">Low</div><div class="c" style="right:1260px;top:739px;">1,445</div><div class="c" style="right:1139px;top:739px;">12</div><div class="c" style="right:972px;top:739px;">17,340</div><div class="c" style="right:823px;top:739px;">173</div><div class="c" style="right:656px;top:739px;">17,167</div><div class="c" style="right:506px;top:739px;">4,335</div><div class="c" style="right:357px;top:739px;font-weight:bold;">12,832</div><div class="c" style="left:99.5px;top:774px">Montana</div><div class="c" style="left:214px;top:774px">Low</div><div class="c" style="right:1260px;top:774px;">1,830</div><div class="c" style="right:1139px;top:774px;">7</div><div class="c" style="right:972px;top:774px;">12,810</div><div class="c" style="right:823px;top:774px;">128</div><div class="c" style="right:656px;top:774px;">12,682</div><div class="c" style="right:506px;top:774px;">9,150</div><div class="c" style="right:357px;top:774px;font-weight:bold;">3,532</div><div class="c" style="left:99.5px;top:809px">Velo</div><div class="c" style="left:214px;top:809px">Low</div><div class="c" style="right:1260px;top:809px;">923</div><div class="c" style="right:1139px;top:809px;">125</div><div class="c" style="right:972px;top:809px;">115,375</div><div class="c" style="right:823px;top:809px;">1,154</div><div class="c" style="right:656px;top:809px;">114,221</div><div class="c" style="right:506px;top:809px;">110,760</div><div class="c" style="right:357px;top:809px;font-weight:bold;">3,461</div><div class="c" style="right:1260px;top:843px;font-weight:bold;">20,771</div><div class="c" style="right:1139px;top:843px;font-weight:bold;">680</div><div class="c" style="right:972px;top:843px;font-weight:bold;">1,259,617</div><div class="c" style="right:823px;top:843px;font-weight:bold;">1,548</div><div class="c" style="right:656px;top:843px;font-weight:bold;">1,258,068</div><div class="c" style="right:506px;top:843px;font-weight:bold;">1,021,538</div><div class="c" style="right:357px;top:843px;font-weight:bold;">236,530</div><div class="a" style="left:1568px;top:627px;width:117px;height:38px;border:2px solid #217346"></div><div class="a" style="left:1680px;top:660px;width:7px;height:7px;background:#217346;border:1px solid #fff"></div><div class="a" style="left:564px;top:498px;width:30px;height:30px;border-radius:50%;background:#f8f236"></div><svg class="a" style="left:571px;top:505px" width="17" height="17" viewBox="0 0 17 17"><path d="M5.5 1h6v4.5H16v6h-4.5V16h-6v-4.5H1v-6h4.5z" fill="#fff" stroke="#000" stroke-width="1.6" stroke-linejoin="round"/></svg><svg class="a" style="left:575px;top:500px" width="8" height="6" viewBox="0 0 8 6"><path d="M1 5.5L4 1 7 5.5" fill="none" stroke="#c8c060" stroke-width="1"/></svg><div class="a" style="left:1732px;top:252px;width:19px;height:20px;background:#fff;border:1px solid #cfcfcf"></div><svg class="a" style="left:1736px;top:258px" width="11" height="7" viewBox="0 0 11 7"><path d="M0 7h11L5.5 0z" fill="#777"/></svg><div class="a" style="left:1732px;top:272px;width:19px;height:532px;background:#fff;border:1px solid #cfcfcf"></div><div class="a" style="left:1732px;top:804px;width:19px;height:60px;background:#dcdcdc"></div><div class="a" style="left:1732px;top:865px;width:19px;height:19px;background:#fff;border:1px solid #cfcfcf"></div><svg class="a" style="left:1736px;top:872px" width="11" height="7" viewBox="0 0 11 7"><path d="M0 0h11L5.5 7z" fill="#777"/></svg><div class="a" style="left:0;top:884px;width:1752px;height:8px;background:#e8e8e8"></div><div class="a" style="left:105px;top:886px;width:192px;height:6px;border-left:1px solid #bbb;border-right:1px solid #bbb"></div><div class="a" style="left:107px;top:887px;width:188px;height:5px;background:#13a555"></div><div class="a" style="left:300px;top:887px;width:140px;height:5px;background:#5b8fd8"></div><div class="a" style="left:445px;top:887px;width:159px;height:5px;background:#e5680e"></div><div class="a" style="left:606px;top:884px;width:1px;height:8px;background:#aaa"></div><div class="a" style="left:608px;top:886px;width:94px;height:6px;background:#fcf1ec"></div><div class="a" style="left:705px;top:884px;width:1023px;height:8px;background:#e0e0e0;border-top:1px solid #c8c8c8;border-left:1px solid #c8c8c8"></div><div class="t" style="left:122px;top:888px;font-size:17px;color:#1a1a1a;font-weight:normal">Net Working Capital</div><div class="t" style="left:316px;top:888px;font-size:17px;color:#1a1a1a;font-weight:normal">Free Cash Flow</div><div class="t" style="left:458px;top:888px;font-size:17px;color:#fff;font-weight:normal">Cost Center Data</div><div class="t" style="left:619px;top:888px;font-size:17px;color:#217346;font-weight:bold">Overview</div><div class="a" style="left:741px;top:887px;width:16px;height:16px;border-radius:50%;border:1.5px solid #777"></div><div class="a" style="left:1068px;top:887px;width:20px;height:6px;background:#fff;border:1px solid #c8c8c8"></div><div class="a" style="left:1090px;top:887px;width:640px;height:6px;background:#fff;border:1px solid #d0d0d0"></div></body></html>
